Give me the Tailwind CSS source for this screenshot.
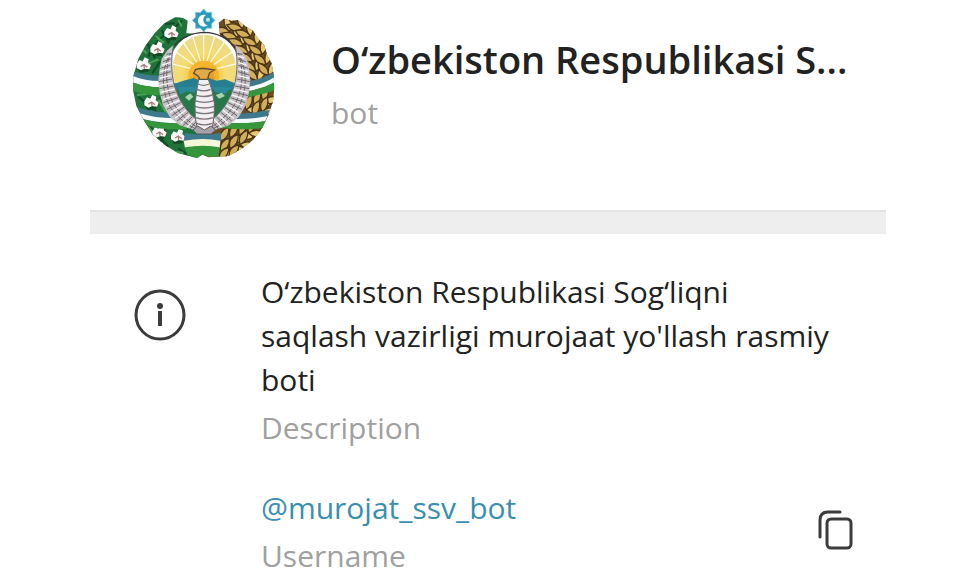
<!DOCTYPE html>
<html lang="uz">
<head>
  <meta charset="UTF-8">
  <meta name="viewport" content="width=device-width, initial-scale=1.0">
  <title>O‘zbekiston Respublikasi Sog‘liqni saqlash vazirligi</title>
  <script src="https://cdn.jsdelivr.net/npm/@tailwindcss/browser@4"></script>
</head>
<body class="bg-white font-['Open_Sans',sans-serif] text-[#222]">

  <main class="ml-[90px] mr-[94px]">

    <!-- Header -->
    <header class="flex items-start h-[210px] pl-[35px]">
      <svg class="w-40 h-[165px] shrink-0" viewBox="0 0 480 495" role="img" aria-label="Emblem">
        <defs>
          <clipPath id="disc"><path d="M188 62 L184 100 L285 105 L281 68 L296 56 L318 62 L338 60 L360 78 L384 92 L398 114 L418 136 L426 164 L440 190 L446 225 L448 265 L444 305 L430 345 L412 384 L384 420 L350 446 L310 468 L250 472 L232 464 L215 474 L160 460 L120 436 L82 402 L56 360 L34 318 L24 270 L26 225 L40 176 L62 136 L90 98 L118 70 L150 52 Q172 50 188 62Z"/></clipPath>
          <clipPath id="sky"><ellipse cx="238" cy="212" rx="96" ry="108"/></clipPath>
          <radialGradient id="sun" gradientUnits="userSpaceOnUse" cx="236" cy="225" r="120">
            <stop offset="0.2" stop-color="#f5b83a"/>
            <stop offset="0.55" stop-color="#f6dc72"/>
            <stop offset="1" stop-color="#e8d98e"/>
          </radialGradient>
          <g id="cotton">
            <path d="M-24 4 L-10 24 L14 22 L24 2 L8 14Z" fill="#164a27"/>
            <path d="M-20 -2 L-12 -14 L-2 -10 L4 -22 L16 -16 L14 -6 L23 2 L18 14 L4 12 L-8 17 L-20 10Z" fill="#fbf8f7"/>
            <path d="M-8 6 L2 0 L12 8 M2 0 L3 12" stroke="#a58078" stroke-width="4" fill="none"/>
          </g>
          <g id="grain" stroke="#4a3418" stroke-width="4">
            <path d="M0 3 C-24 -2 -30 -20 -25 -38 C-8 -30 2 -16 0 3Z" fill="#d3ad58"/>
            <path d="M0 3 C24 -2 30 -20 25 -38 C8 -30 -2 -16 0 3Z" fill="#e6c878"/>
          </g>
          <g id="wing">
            <path d="M146 134 L126 152 L110 176 L104 206 L100 240 L104 278 L114 316 L134 350 L164 376 L218 394 L228 370 C196 346 170 316 156 278 C138 238 135 180 146 134Z" fill="#c6c2c6"/>
            <g fill="none" stroke="#6d676d" stroke-width="3">
              <path d="M146 134 C136 180 138 238 156 278 C170 316 196 346 228 370"/>
              <path d="M136 160 C120 205 120 270 148 315 C168 345 195 368 220 384"/>
              <path d="M130 172 C108 220 112 280 136 322 C155 350 185 375 212 386"/>
              <path d="M102 225 L137 215 M101 245 L141 237 M103 266 L146 258 M107 287 L152 276 M115 308 L159 293 M126 328 L167 308 M140 347 L177 322 M156 363 L189 337 M174 377 L202 350 M194 388 L216 362 M106 205 L136 196 M114 185 L137 177 M124 163 L141 160"/>
            </g>
            <g fill="none" stroke="#f6f4f6" stroke-width="4">
              <path d="M104 235 L138 226 M104 256 L143 248 M107 277 L149 267 M114 298 L155 285 M123 318 L163 301 M135 338 L172 316 M150 355 L183 330 M167 370 L195 344 M186 382 L209 357 M106 215 L136 206 M112 195 L136 187 M118 174 L138 168"/>
            </g>
          </g>
        </defs>

        <!-- Star with crescent -->
        <g transform="translate(236 61)">
          <path d="M0 -34 L10 -23 L24 -24 L24 -10 L34 0 L24 10 L24 24 L10 23 L0 34 L-10 23 L-24 24 L-24 10 L-34 0 L-24 -10 L-24 -24 L-10 -23Z" fill="#2b9aba" stroke="#7cc5d6" stroke-width="3"/>
          <path d="M7 -16 A18 18 0 1 0 12 15 A17 17 0 0 1 7 -16Z" fill="#fff"/>
          <circle cx="13" cy="-2" r="6" fill="#bfe3ec"/>
        </g>

        <g clip-path="url(#disc)">
          <!-- Cotton side -->
          <path d="M15 40 H236 V480 H15Z" fill="#1f733a"/>
          <g fill="none" stroke="#144a28" stroke-width="6">
            <path d="M170 62 C150 90 90 110 70 170 M110 90 L132 130 M68 130 L90 175 M105 185 L82 220 M40 190 L60 215 M150 70 L120 72 M40 290 L100 340 M60 365 L130 440 M120 385 L105 430 M160 445 L190 465"/>
          </g>
          <g fill="none" stroke="#46a553" stroke-width="6">
            <path d="M160 60 L170 80 M92 108 L110 122 M54 150 L66 160 M118 128 L98 116 M70 190 L100 178 M36 285 L66 282 M100 300 L128 345 M70 380 L84 398 M140 455 L175 458"/>
          </g>
          <use href="#cotton" x="138" y="98"/>
          <use href="#cotton" x="96" y="146"/>
          <use href="#cotton" x="55" y="194"/>
          <use href="#cotton" x="78" y="306"/>
          <use href="#cotton" x="102" y="396"/>
          <use href="#cotton" x="158" y="408"/>

          <!-- Wheat side -->
          <path d="M236 40 H460 V480 H236Z" fill="#6b4e24"/>
          <use href="#grain" transform="translate(312 92) rotate(-50)"/>
          <use href="#grain" transform="translate(334 110) rotate(-44)"/>
          <use href="#grain" transform="translate(353 132) rotate(-38)"/>
          <use href="#grain" transform="translate(369 156) rotate(-32)"/>
          <use href="#grain" transform="translate(382 182) rotate(-25)"/>
          <use href="#grain" transform="translate(392 210) rotate(-18)"/>
          <use href="#grain" transform="translate(398 238) rotate(-10)"/>
          <use href="#grain" transform="translate(350 84) rotate(-45)"/>
          <use href="#grain" transform="translate(374 106) rotate(-38)"/>
          <use href="#grain" transform="translate(394 132) rotate(-32)"/>
          <use href="#grain" transform="translate(410 160) rotate(-25)"/>
          <use href="#grain" transform="translate(422 190) rotate(-18)"/>
          <use href="#grain" transform="translate(431 222) rotate(-10)"/>
          <use href="#grain" transform="translate(366 328) rotate(52)"/>
          <use href="#grain" transform="translate(392 316) rotate(50)"/>
          <use href="#grain" transform="translate(418 302) rotate(45)"/>
          <use href="#grain" transform="translate(388 346) rotate(52)"/>
          <use href="#grain" transform="translate(414 334) rotate(50)"/>
          <use href="#grain" transform="translate(290 422) rotate(62)"/>
          <use href="#grain" transform="translate(318 412) rotate(62)"/>
          <use href="#grain" transform="translate(346 404) rotate(60)"/>
          <use href="#grain" transform="translate(374 398) rotate(58)"/>
          <use href="#grain" transform="translate(290 454) rotate(65)"/>
          <use href="#grain" transform="translate(318 444) rotate(62)"/>
          <use href="#grain" transform="translate(348 432) rotate(60)"/>
          <use href="#grain" transform="translate(286 480) rotate(68)"/>
          <use href="#grain" transform="translate(316 472) rotate(68)"/>

          <!-- Ribbons -->
          <path d="M20 212 Q60 228 108 226 V244 Q60 246 20 228Z" fill="#3d7a8e"/>
          <path d="M20 226 Q60 244 108 243 V262 Q60 262 20 246Z" fill="#f5fafa"/>
          <path d="M20 246 Q60 263 108 262 V286 Q60 288 20 270Z" fill="#36963c"/>
          <path d="M38 322 Q90 340 160 338 L178 356 Q100 358 44 342Z" fill="#3d7a8e"/>
          <path d="M44 340 Q100 358 170 354 L184 370 Q110 372 56 358Z" fill="#f5fafa"/>
          <path d="M54 358 Q110 374 184 370 V388 Q110 392 66 376Z" fill="#36963c"/>
          <path d="M366 244 Q410 240 450 214 V232 Q410 258 366 260Z" fill="#3d7a8e"/>
          <path d="M366 260 Q410 256 450 230 V248 Q410 268 366 274Z" fill="#f5fafa"/>
          <path d="M366 273 Q410 268 450 246 V270 Q410 286 362 292Z" fill="#36963c"/>
          <path d="M316 342 Q370 342 434 330 L426 350 Q370 360 306 356Z" fill="#3d7a8e"/>
          <path d="M306 356 Q370 360 428 348 L420 364 Q370 372 300 368Z" fill="#f5fafa"/>
          <path d="M300 368 Q370 372 424 362 L412 384 Q360 392 290 384Z" fill="#36963c"/>
        </g>

        <!-- Valley and sun -->
        <ellipse cx="238" cy="212" rx="108" ry="116" fill="#fff"/>
        <path d="M128 250 H348 Q345 340 268 394 H208 Q132 340 128 250Z" fill="#267849"/>
        <g clip-path="url(#sky)">
          <rect x="135" y="98" width="210" height="150" fill="url(#sun)"/>
          <g stroke="#fffbe0" stroke-width="4">
            <path d="M236 215 L236 95 M236 215 L200 100 M236 215 L272 100 M236 215 L168 118 M236 215 L305 118 M236 215 L145 150 M236 215 L330 150 M236 215 L135 190 M236 215 L342 190"/>
          </g>
          <circle cx="236" cy="228" r="46" fill="#f4b52c"/>
          <circle cx="236" cy="232" r="32" fill="#ec9f22"/>
        </g>
        <path d="M146 252 L175 242 L206 234 L225 242 L252 234 L275 242 L300 238 L330 250 L334 270 H144Z" fill="#257f91"/>
        <path d="M160 262 L215 258 L210 278 L185 274 L165 284Z M260 260 L320 262 L300 282 L270 276Z" fill="#2a8a9a"/>
        <path d="M180 292 L196 280 L205 290 L192 302Z M272 285 L290 278 L300 288 L282 296Z" fill="#a9d3b2"/>
        <path d="M136 150 Q175 99 236 97 Q300 98 336 150" fill="none" stroke="#3a363a" stroke-width="4"/>

        <!-- Bird -->
        <use href="#wing"/>
        <use href="#wing" transform="translate(476 0) scale(-1 1)"/>
        <path d="M222 232 Q216 262 210 310 Q208 355 218 392 H258 Q270 355 268 310 Q262 265 248 232Z" fill="#f1eff1" stroke="#6b666b" stroke-width="3"/>
        <path d="M219 252 Q236 260 252 252 M216 268 Q236 277 257 268 M212 285 Q236 294 262 285 M210 302 Q238 312 267 302 M209 319 Q238 329 268 319 M210 336 Q238 346 267 336 M212 353 Q238 362 264 353 M215 370 Q238 379 261 370" fill="none" stroke="#7c767c" stroke-width="4"/>
        <path d="M206 220 L212 208 Q235 202 268 210 L254 218 Q250 228 248 238 H224 Q224 228 206 220Z" fill="#e0a94a" stroke="#5f5034" stroke-width="4"/>
        <path d="M204 390 L218 378 L238 390 L258 378 L272 390 L258 402 H216Z" fill="#a5a1a6" stroke="#5d585d" stroke-width="3"/>

        <!-- Bottom ribbon -->
        <path d="M180 398 Q236 410 288 398 V424 Q236 416 176 424Z" fill="#3d7a8e"/>
        <path d="M176 422 Q236 412 286 422 L284 444 Q236 434 180 444Z" fill="#f4f6d8"/>
        <path d="M180 442 Q236 432 284 442 L280 470 H248 L232 460 L220 473 L186 464Z" fill="#36963c"/>
      </svg>
      <div class="min-w-0 flex-1 pl-[46px] pt-[34px]">
        <h1 class="text-[38px] leading-[50px] font-semibold whitespace-nowrap">O‘zbekiston Respublikasi S...</h1>
        <p class="mt-1 text-[30px] leading-[50px] text-[#a0a0a0]">bot</p>
      </div>
    </header>

    <div class="h-6 bg-[#eeeeee] border-t-2 border-[#e4e4e4]"></div>

    <!-- Description -->
    <section class="flex items-start pt-9 pl-11">
      <svg class="w-[52px] h-[52px] mt-[19px] shrink-0" viewBox="0 0 52 52" fill="none" aria-hidden="true">
        <circle cx="26" cy="26" r="24" stroke="#3c3c3c" stroke-width="3"/>
        <circle cx="26" cy="17" r="3" fill="#3c3c3c"/>
        <path d="M26 22V37" stroke="#3c3c3c" stroke-width="4"/>
      </svg>
      <div class="pl-[75px]">
        <p class="text-[30px] leading-[44px]">O‘zbekiston Respublikasi Sog‘liqni<br>saqlash vazirligi murojaat yo'llash rasmiy<br>boti</p>
        <p class="mt-1 text-[30px] leading-[44px] text-[#a0a0a0]">Description</p>
      </div>
    </section>

    <!-- Username -->
    <section class="flex items-start justify-between pt-9 pl-[171px] pr-8">
      <div>
        <a href="#" class="block text-[30px] leading-[44px] text-[#3a8fb0]">@murojat_ssv_bot</a>
        <p class="mt-1 text-[30px] leading-[44px] text-[#a0a0a0]">Username</p>
      </div>
      <button type="button" class="mt-6" aria-label="Copy username">
        <svg class="w-9 h-10" viewBox="0 0 36 40" fill="none" stroke="#3c3c3c" stroke-width="3" stroke-linecap="round">
          <rect x="9" y="9" width="24" height="29" rx="4"/>
          <path d="M2 27V10Q2 2 10 2H22"/>
        </svg>
      </button>
    </section>

  </main>

</body>
</html>
